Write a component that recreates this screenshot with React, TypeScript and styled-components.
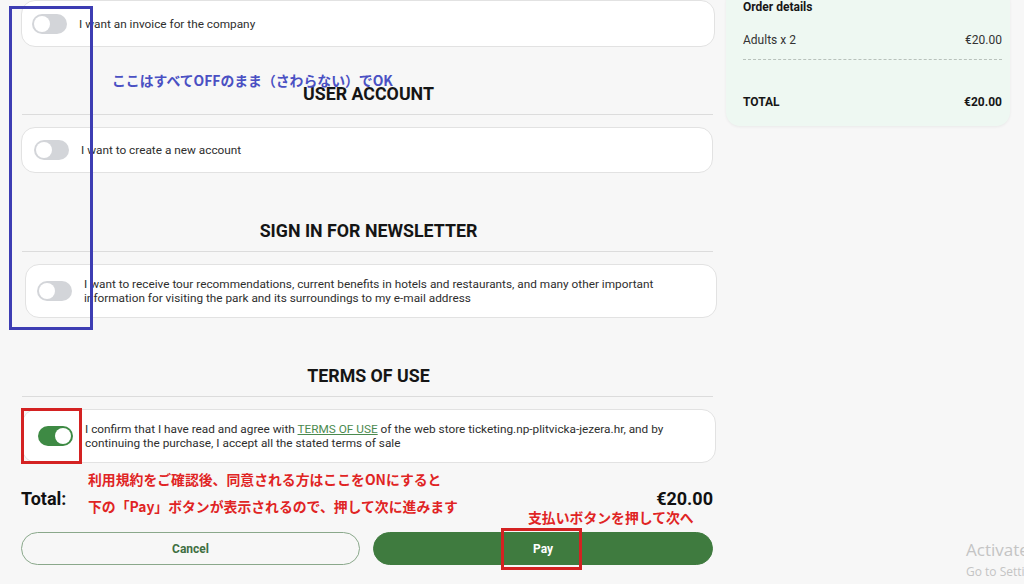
import React from "react";
import styled, { createGlobalStyle } from "styled-components";

const Global = createGlobalStyle`
  html, body { margin: 0; padding: 0; background: #f7f7f7; }
  body { font-family: Roboto, "Noto Sans", Arial, sans-serif; color: #222; overflow: hidden; }
  * { box-sizing: border-box; }
`;

const Screen = styled.div`
  position: relative;
  width: 1024px;
  height: 584px;
  overflow: hidden;
  background: #f7f7f7;
`;

const Layout = styled.div`
  display: grid;
  grid-template-columns: 695px 284px;
  column-gap: 10px;
  padding-left: 21px;
  align-items: start;
`;

const MainCol = styled.div`
  display: flex;
  flex-direction: column;
`;

const OptionCard = styled.div<{ $h: number; $indent: number; $left?: number; $right?: number }>`
  display: flex;
  align-items: center;
  gap: 12px;
  height: ${(p) => p.$h}px;
  margin-left: ${(p) => p.$left ?? 0}px;
  margin-right: ${(p) => p.$right ?? 0}px;
  padding-left: ${(p) => p.$indent}px;
  padding-right: 40px;
  background: #fff;
  border: 1px solid #e2e2e2;
  border-radius: 14px;
  font-size: 11.8px;
  line-height: 14px;
  color: #2e2e2e;
`;

const Toggle = styled.span<{ $on?: boolean }>`
  position: relative;
  flex: none;
  width: 35px;
  height: 20px;
  border-radius: 10px;
  background: ${(p) => (p.$on ? "#3e8a44" : "#d3d5d9")};
  &::after {
    content: "";
    position: absolute;
    top: 2px;
    left: ${(p) => (p.$on ? "17px" : "2px")};
    width: 16px;
    height: 16px;
    border-radius: 50%;
    background: #fff;
  }
`;

const Heading = styled.h2<{ $top: number }>`
  margin: ${(p) => p.$top}px 0 0;
  height: 20px;
  line-height: 20px;
  text-align: center;
  font-size: 17.8px;
  font-weight: 700;
  color: #151515;
`;

const Divider = styled.hr`
  margin: 10px 3px 12px 1px;
  border: 0;
  border-top: 1px solid #dcdcdc;
`;

const TermsLink = styled.a`
  color: #4b8a4f;
  text-decoration: underline;
`;

const TotalRow = styled.div`
  display: flex;
  justify-content: space-between;
  align-items: center;
  height: 24px;
  margin-top: 23px;
  padding-right: 3px;
  font-size: 18px;
  font-weight: 700;
  color: #111;
`;

const ButtonRow = styled.div`
  display: grid;
  grid-template-columns: 339px 340px;
  column-gap: 13px;
  margin-top: 22px;
`;

const Btn = styled.button<{ $primary?: boolean }>`
  height: 33px;
  border-radius: 17px;
  font-family: Roboto, Arial, sans-serif;
  font-size: 12px;
  font-weight: 700;
  cursor: pointer;
  border: 1px solid ${(p) => (p.$primary ? "#3f7b3f" : "#8aa88b")};
  background: ${(p) => (p.$primary ? "#3f7b3f" : "transparent")};
  color: ${(p) => (p.$primary ? "#fff" : "#3f6f42")};
`;

const OrderCard = styled.div`
  margin-top: -12px;
  padding: 12px 8px 0 17px;
  height: 138px;
  background: #eef8f2;
  border-radius: 14px;
  box-shadow: 0 1px 3px rgba(0, 0, 0, 0.06);
  font-size: 12px;
  color: #2c2c2c;
`;

const OrderTitle = styled.div`
  font-weight: 700;
  color: #161616;
  line-height: 14px;
`;

const OrderLine = styled.div<{ $bold?: boolean; $top: number }>`
  display: flex;
  justify-content: space-between;
  margin-top: ${(p) => p.$top}px;
  line-height: 14px;
  font-weight: ${(p) => (p.$bold ? 700 : 400)};
  color: ${(p) => (p.$bold ? "#161616" : "#333")};
`;

const Dashed = styled.div`
  margin-top: 12px;
  border-top: 1px dashed #b8c2bc;
`;

const Overlay = styled.div<{ $x: number; $y: number; $w: number; $h: number; $c: string }>`
  position: absolute;
  left: ${(p) => p.$x}px;
  top: ${(p) => p.$y}px;
  width: ${(p) => p.$w}px;
  height: ${(p) => p.$h}px;
  border: 3px solid ${(p) => p.$c};
  pointer-events: none;
`;

const Note = styled.div<{ $x: number; $y: number; $c: string }>`
  position: absolute;
  left: ${(p) => p.$x}px;
  top: ${(p) => p.$y}px;
  font-family: "Noto Sans CJK JP", "Noto Sans", sans-serif;
  font-size: 13.85px;
  font-weight: 700;
  line-height: 18px;
  color: ${(p) => p.$c};
  white-space: nowrap;
`;

const Watermark = styled.div`
  position: absolute;
  left: 966px;
  top: 541px;
  font-family: "Open Sans", "DejaVu Sans", sans-serif;
  color: #c4c4c4;
  white-space: nowrap;
  line-height: 1;
`;

const WmTitle = styled.div`
  font-size: 17px;
`;

const WmSub = styled.div`
  margin-top: 8px;
  font-size: 12px;
`;

export default function App() {
  return (
    <>
      <Global />
      <Screen>
        <Layout>
          <MainCol>
            <OptionCard $h={47} $indent={10} $right={1}>
              <Toggle />
              <span>I want an invoice for the company</span>
            </OptionCard>

            <Heading $top={37}>USER ACCOUNT</Heading>
            <Divider />
            <OptionCard $h={46} $indent={12} $right={3}>
              <Toggle />
              <span>I want to create a new account</span>
            </OptionCard>

            <Heading $top={48}>SIGN IN FOR NEWSLETTER</Heading>
            <Divider />
            <OptionCard $h={54} $indent={11} $left={4} $right={-1}>
              <Toggle />
              <span>
                I want to receive tour recommendations, current benefits in hotels and restaurants, and many other important
                information for visiting the park and its surroundings to my e-mail address
              </span>
            </OptionCard>

            <Heading $top={48}>TERMS OF USE</Heading>
            <Divider />
            <OptionCard $h={54} $indent={15} $left={1}>
              <Toggle $on />
              <span>
                I confirm that I have read and agree with <TermsLink>TERMS OF USE</TermsLink> of the web store
                ticketing.np-plitvicka-jezera.hr, and by continuing the purchase, I accept all the stated terms of sale
              </span>
            </OptionCard>

            <TotalRow>
              <span>Total:</span>
              <span>€20.00</span>
            </TotalRow>

            <ButtonRow>
              <Btn>Cancel</Btn>
              <Btn $primary>Pay</Btn>
            </ButtonRow>
          </MainCol>

          <OrderCard>
            <OrderTitle>Order details</OrderTitle>
            <OrderLine $top={19}>
              <span>Adults x 2</span>
              <span>€20.00</span>
            </OrderLine>
            <Dashed />
            <OrderLine $bold $top={35}>
              <span>TOTAL</span>
              <span>€20.00</span>
            </OrderLine>
          </OrderCard>
        </Layout>

        <Overlay $x={9} $y={6} $w={84} $h={324} $c="#3d3db3" />
        <Note $x={112} $y={71} $c="#4a50c3">ここはすべてOFFのまま（さわらない）でOK</Note>

        <Overlay $x={21} $y={408} $w={61} $h={56} $c="#d42222" />
        <Note $x={88} $y={470} $c="#e02424">利用規約をご確認後、同意される方はここをONにすると</Note>
        <Note $x={88} $y={497} $c="#e02424">下の「Pay」ボタンが表示されるので、押して次に進みます</Note>
        <Note $x={528} $y={508} $c="#e02424">支払いボタンを押して次へ</Note>
        <Overlay $x={501} $y={528} $w={81} $h={42} $c="#d42222" />

        <Watermark>
          <WmTitle>Activate</WmTitle>
          <WmSub>Go to Settings</WmSub>
        </Watermark>
      </Screen>
    </>
  );
}
